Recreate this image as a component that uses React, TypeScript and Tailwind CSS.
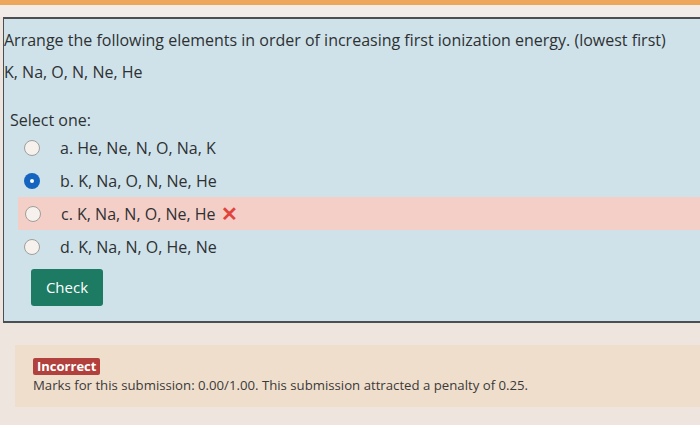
import React from "react";

const OPTIONS = [
  { key: "a", text: "a. He, Ne, N, O, Na, K", checked: false, wrong: false },
  { key: "b", text: "b. K, Na, O, N, Ne, He", checked: true, wrong: false },
  { key: "c", text: "c. K, Na, N, O, Ne, He", checked: false, wrong: true },
  { key: "d", text: "d. K, Na, N, O, He, Ne", checked: false, wrong: false },
];

function Radio({ checked }: { checked: boolean }) {
  if (checked) {
    return (
      <span className="flex h-[16px] w-[16px] items-center justify-center rounded-full bg-[#1565c0]">
        <span className="h-[4px] w-[4px] rounded-full bg-white" />
      </span>
    );
  }
  return <span className="h-[16px] w-[16px] rounded-full border border-[#a09e9a] bg-[#f6f1ec]" />;
}

export default function App() {
  return (
    <div
      className="flex h-[425px] w-[700px] flex-col overflow-hidden bg-[#eee6de] text-[#2e3133]"
      style={{ fontFamily: '"Open Sans", "Liberation Sans", sans-serif' }}
    >
      <div className="h-[5px] bg-[#eea65a]" />
      <div className="h-[12px] bg-[#f1ece7]" />

      {/* question panel */}
      <div className="ml-[3px] h-[306px] border-t-2 border-b-2 border-l border-[#4a4f52] bg-[#cfe2e9] pt-[10px]">
        <p className="text-[16px] leading-[22px]">
          Arrange the following elements in order of increasing first ionization energy. (lowest first)
        </p>
        <p className="mt-[10px] text-[16px] leading-[22px]">K, Na, O, N, Ne, He</p>

        <p className="mt-[26px] pl-[6px] text-[16px] leading-[22px]">Select one:</p>

        <div className="flex flex-col">
          {OPTIONS.map((o) => (
            <div
              key={o.key}
              className={
                "flex h-[33px] items-center " + (o.wrong ? "ml-[14px] bg-[#f4cfc8] pl-[7px]" : "pl-[20px]")
              }
            >
              <Radio checked={o.checked} />
              <span className="ml-[20px] text-[16px]">{o.text}</span>
              {o.wrong && <span className="ml-[5px] text-[20px] font-bold leading-none text-[#e0443c]">✕</span>}
            </div>
          ))}
        </div>

        <button className="mt-[6px] ml-[27px] h-[37px] w-[72px] rounded-[3px] bg-[#1e7b63] text-[15px] text-white">
          Check
        </button>
      </div>

      {/* feedback */}
      <div className="mt-[22px] ml-[15px] flex h-[62px] flex-col justify-center bg-[#f0decc] pl-[18px]">
        <span className="w-fit rounded-[2px] bg-[#b2403d] px-[4px] text-[13px] font-bold leading-[17px] text-white">
          Incorrect
        </span>
        <p className="mt-[1px] text-[13.2px] leading-[18px] text-[#3a3a3a]">
          Marks for this submission: 0.00/1.00. This submission attracted a penalty of 0.25.
        </p>
      </div>
    </div>
  );
}
